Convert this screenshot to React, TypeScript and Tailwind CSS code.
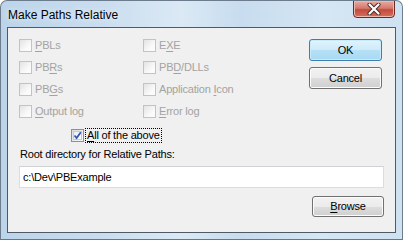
import React from "react";

const font = "font-['Liberation_Sans',Arial,sans-serif]";

function Key({ children }: { children: React.ReactNode }) {
  return <span className="underline underline-offset-[2px]">{children}</span>;
}

function Box({ checked = false }: { checked?: boolean }) {
  if (checked) {
    return (
      <div className="w-[13px] h-[13px] border border-[#8e8f8f] bg-[linear-gradient(135deg,#dcdcdc,#fafafa)] p-[1px] shrink-0">
        <div className="w-full h-full bg-[linear-gradient(135deg,#e8eef8,#ffffff)] border border-[#c6cbd3]">
          <svg width="9" height="9" viewBox="0 0 9 9" className="block -ml-[1px] -mt-[1px]">
            <path d="M1.5 4.5 L3.6 7 L7.8 1.2" stroke="#3457b0" strokeWidth="1.8" fill="none" />
          </svg>
        </div>
      </div>
    );
  }
  return (
    <div className="w-[13px] h-[13px] border border-[#c3c3c3] bg-[linear-gradient(135deg,#e3e3e3,#fbfbfb_70%)] shrink-0" />
  );
}

function Check({ children }: { children: React.ReactNode }) {
  return (
    <div className="flex items-center h-[13px] gap-[3px] text-[#a3a3a3]">
      <Box />
      <span className="leading-[13px]">{children}</span>
    </div>
  );
}

function Button({
  children,
  primary = false,
  small = false,
}: {
  children: React.ReactNode;
  primary?: boolean;
  small?: boolean;
}) {
  return (
    <div
      className={`${small ? "w-[72px] h-[21px]" : "w-[73px] h-[22px]"} rounded-[3px] border flex items-center justify-center text-black ${
        primary
          ? "border-[#3c7fb1] bg-[linear-gradient(180deg,#e3f3fc_0%,#cdebfa_50%,#b6e0f6_51%,#a8d9f3_100%)] shadow-[inset_0_0_0_1px_#c8ecfc]"
          : "border-[#707070] bg-[linear-gradient(180deg,#f2f2f2_0%,#ebebeb_50%,#dddddd_51%,#cfcfcf_100%)] shadow-[inset_0_0_0_1px_#fcfcfc]"
      }`}
    >
      {children}
    </div>
  );
}

export default function App() {
  return (
    <div
      className={`w-[403px] h-[240px] relative overflow-hidden rounded-t-[7px] border border-[#6d7c8c] border-b-[#2e8ab8] bg-[linear-gradient(90deg,#bcd4ea_0%,#c9ddef_25%,#dbe9f5_45%,#c7dcee_60%,#d5e6f4_80%,#cfe2f2_100%)] ${font}`}
    >
      {/* TITLE BAR */}
      <div className="h-[26px] flex items-center pl-[7px] pt-[1px]">
        <span className="text-[12px] text-black [text-shadow:0_0_6px_#ffffff]">
          Make Paths Relative
        </span>
      </div>

      {/* CLOSE */}
      <div className="absolute right-[7px] top-[-1px] w-[42px] h-[18px] rounded-b-[4px] border border-[#6e2a22] bg-[linear-gradient(180deg,#e8aca2_0%,#d4786c_45%,#c24a3c_55%,#d5705e_100%)] shadow-[inset_0_0_0_1px_#eeb8ae] flex items-center justify-center">
        <svg width="14" height="12" viewBox="0 0 14 12">
          <path d="M2.5 1.5 L11.5 10.5 M11.5 1.5 L2.5 10.5" stroke="#4a2a26" strokeWidth="4" strokeLinecap="round" />
          <path d="M2.5 1.5 L11.5 10.5 M11.5 1.5 L2.5 10.5" stroke="#ffffff" strokeWidth="2.2" strokeLinecap="round" />
        </svg>
      </div>

      {/* CLIENT */}
      <div className="mx-[6px] h-[206px] border border-[#4f5a66] bg-[#f0f0f0] text-[11px] tracking-[-0.2px] text-black">
        <div className="flex pt-[11px]">
          <div className="pl-[11px] grid grid-cols-[124px_auto] gap-y-[9px] w-[301px]">
            <Check><Key>P</Key>BLs</Check>
            <Check>E<Key>X</Key>E</Check>
            <Check>PB<Key>R</Key>s</Check>
            <Check>PB<Key>D</Key>/DLLs</Check>
            <Check>PB<Key>G</Key>s</Check>
            <Check>Application <Key>I</Key>con</Check>
            <Check><Key>O</Key>utput log</Check>
            <Check><Key>E</Key>rror log</Check>
          </div>
          <div className="flex flex-col gap-[6px]">
            <Button primary>OK</Button>
            <Button>Cancel</Button>
          </div>
        </div>

        <div className="flex items-center gap-[1px] pl-[63px] mt-[10px] h-[15px]">
          <Box checked />
          <span className="border border-dotted border-black px-[1px] leading-[13px]">
            <Key>A</Key>ll of the above
          </span>
        </div>

        <div className="pl-[12px] mt-[4px] h-[14px] leading-[14px]">
          Root directory for Relative Paths:
        </div>

        <div className="ml-[11px] mt-[5px] w-[365px] h-[22px] border border-[#dadde2] border-t-[#cfd3d8] bg-white flex items-center pl-[3px]">
          c:\Dev\PBExample
        </div>

        <div className="flex justify-end pr-[11px] mt-[8px]">
          <Button small>
            <Key>B</Key>rowse
          </Button>
        </div>
      </div>
    </div>
  );
}
